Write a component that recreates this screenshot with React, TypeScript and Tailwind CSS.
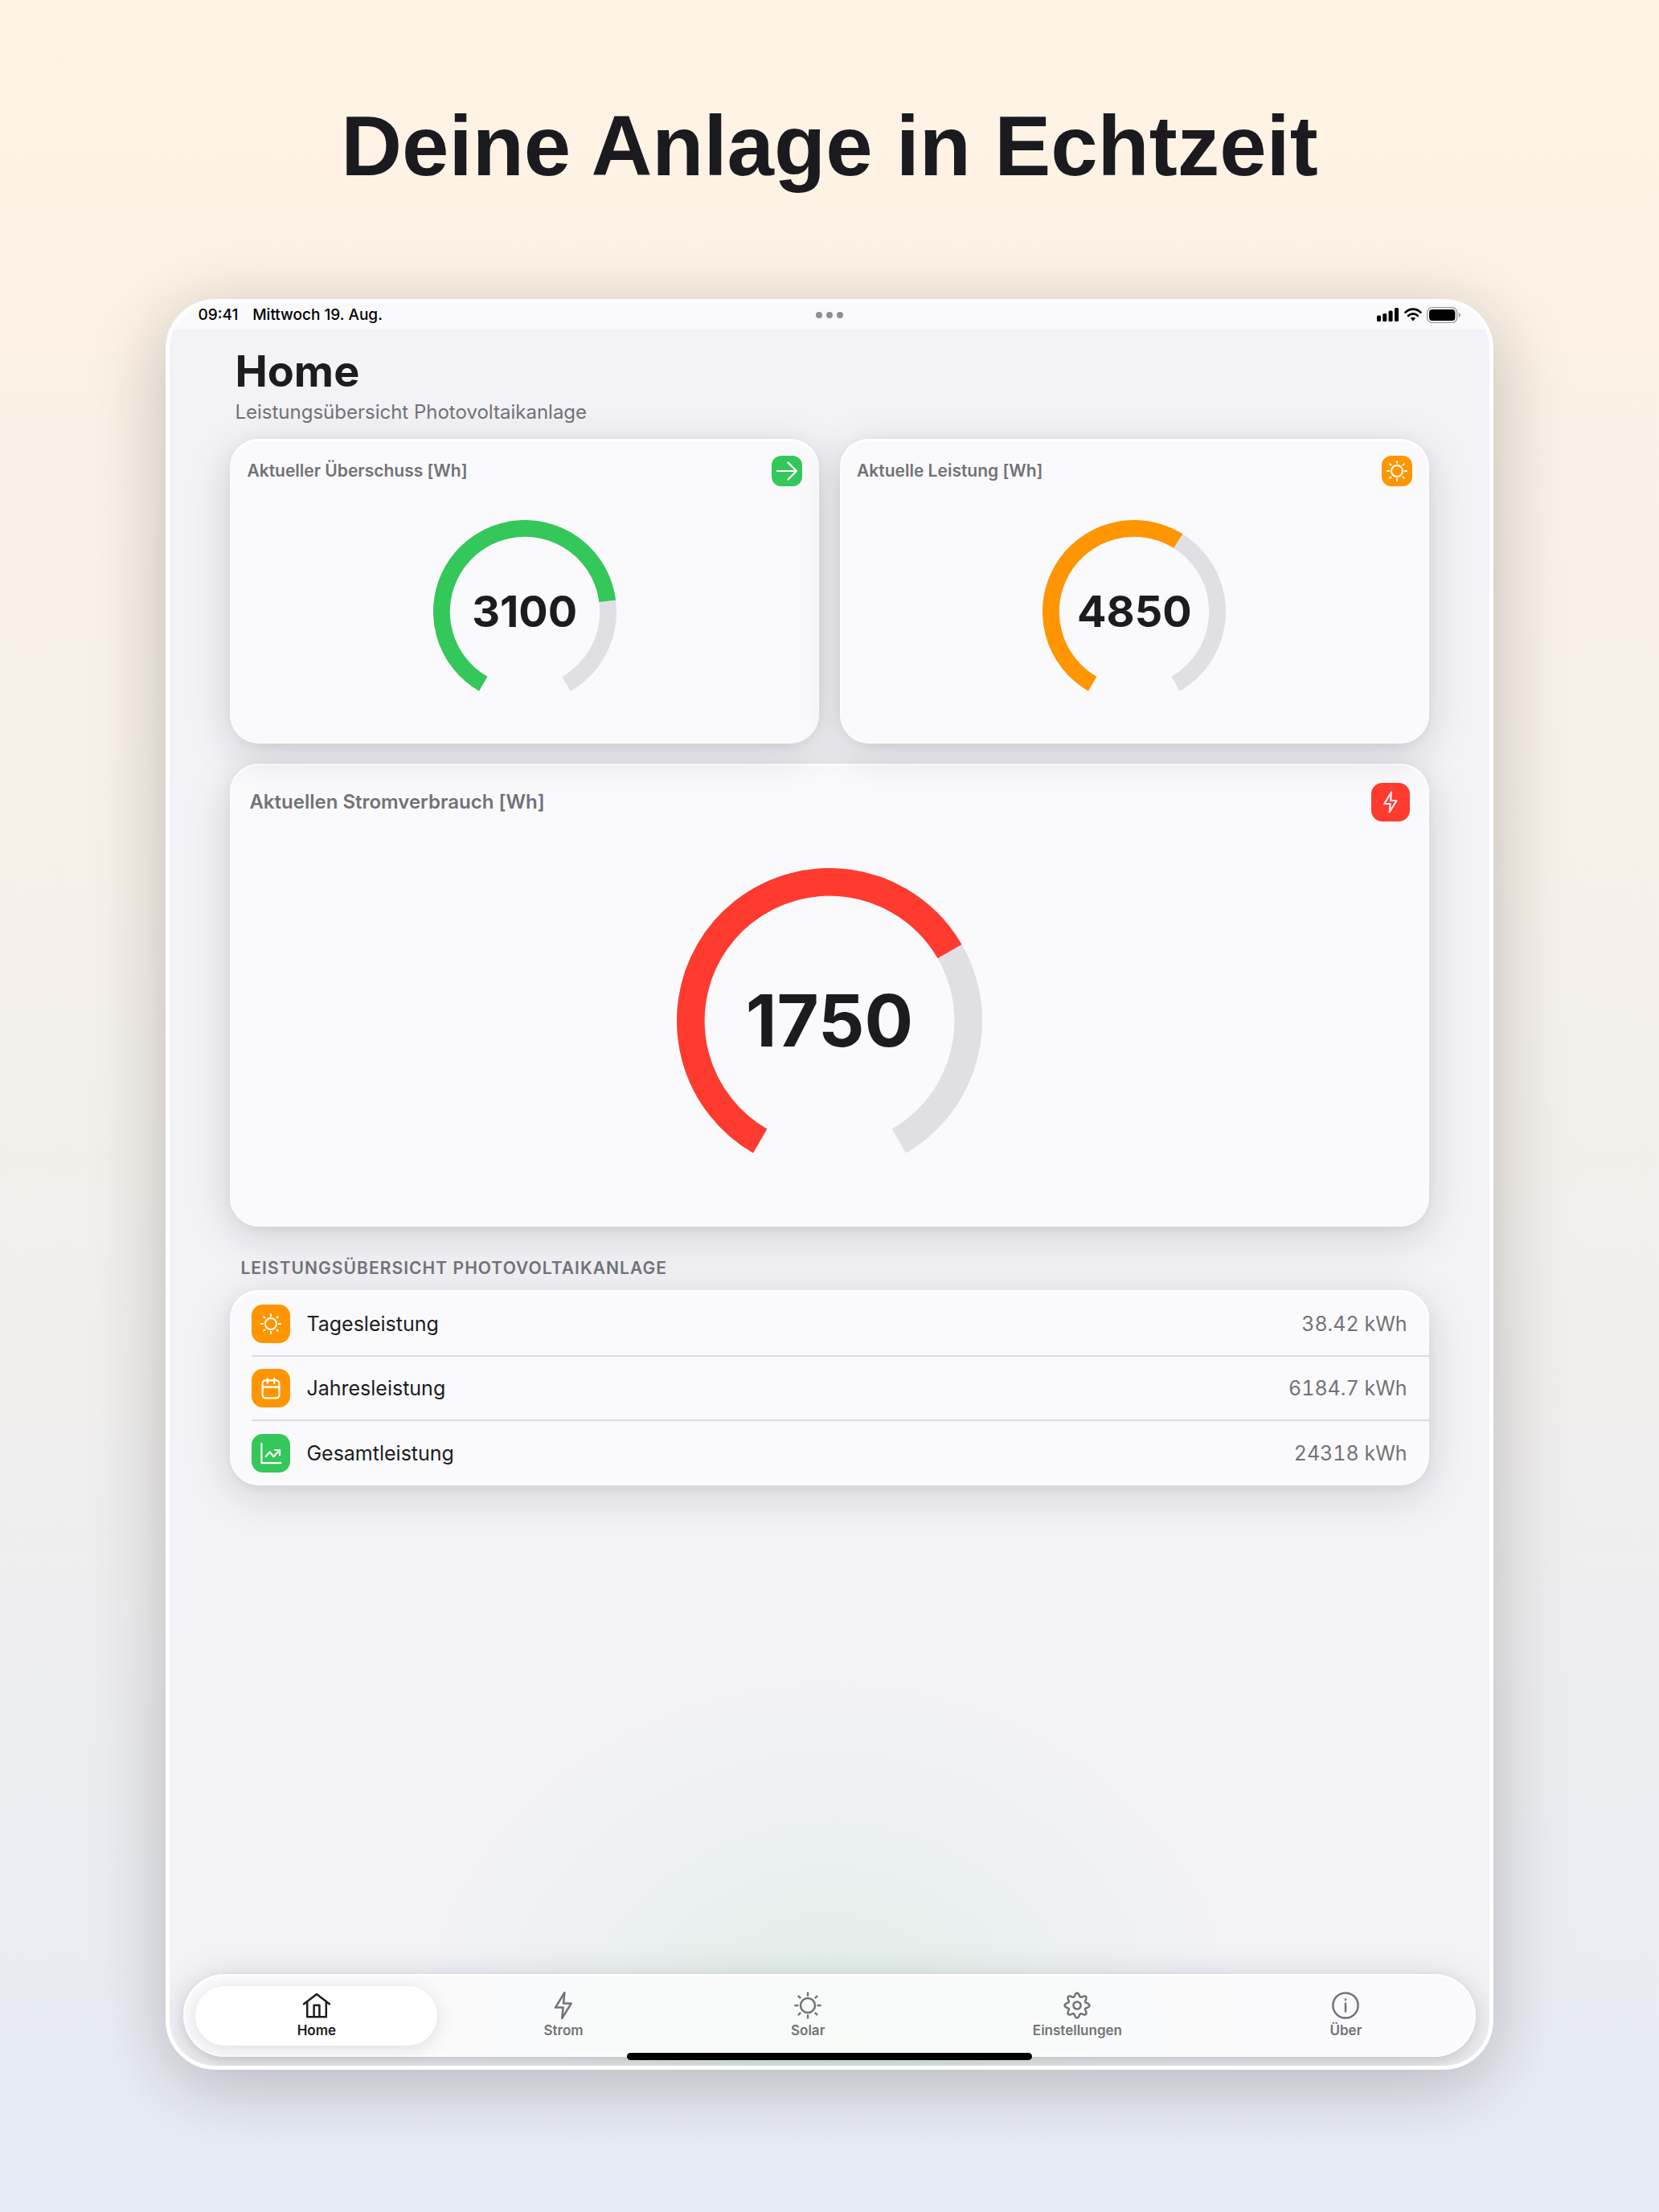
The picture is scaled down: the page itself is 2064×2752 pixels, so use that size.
import type { ReactNode } from 'react';

interface IconProps {
  className?: string;
  strokeWidth?: number;
}

function Icon({ className = 'size-9', strokeWidth = 2.2, children }: IconProps & { children: ReactNode }) {
  return (
    <svg
      viewBox="-18 -18 36 36"
      className={className}
      fill="none"
      stroke="currentColor"
      strokeWidth={strokeWidth}
      strokeLinecap="round"
      strokeLinejoin="round"
      aria-hidden="true"
    >
      {children}
    </svg>
  );
}

function HomeIcon(props: IconProps) {
  return (
    <Icon {...props}>
      <path d="M-16 -1.8 0 -14 16 -1.8M-11.8 -4.6V14.2H11.8V-4.6M-3.4 14.2V-.2H3.4V14.2" />
    </Icon>
  );
}

function BoltIcon(props: IconProps) {
  return (
    <Icon {...props}>
      <path d="M1.4 -16 -10 2.6H-.4L-1.8 16 9.6 -2.4H0Z" />
    </Icon>
  );
}

function SunIcon(props: IconProps) {
  return (
    <Icon {...props}>
      <circle r="9" />
      <path d="M0 -15.6V-12.6M0 12.6V15.6M-15.6 0H-12.6M12.6 0H15.6M-11.3 -11.3 -9.6 -9.6M9.6 9.6 11.3 11.3M-11.3 11.3 -9.6 9.6M9.6 -9.6 11.3 -11.3" />
    </Icon>
  );
}

// Eight soft teeth around the hub
const gearPoints = Array.from({ length: 144 }, (_, i) => {
  const a = (i / 144) * Math.PI * 2;
  const r = 13.3 + 2.2 * Math.cos(8 * a);
  return `${(r * Math.sin(a)).toFixed(2)},${(-r * Math.cos(a)).toFixed(2)}`;
}).join(' ');

function GearIcon(props: IconProps) {
  return (
    <Icon {...props}>
      <polygon points={gearPoints} />
      <circle r="4.6" />
    </Icon>
  );
}

function InfoIcon(props: IconProps) {
  return (
    <Icon {...props}>
      <circle r="15.6" />
      <path d="M0 -2.6V7.6M0 -7.6V-7" />
    </Icon>
  );
}

function ArrowIcon(props: IconProps) {
  return (
    <Icon {...props}>
      <path d="M-12 0H12M1.3 -10.6 12 0 1.3 10.6" />
    </Icon>
  );
}

function CalendarIcon(props: IconProps) {
  return (
    <Icon {...props}>
      <rect x="-10.4" y="-9.6" width="20.8" height="22" rx="3.6" />
      <path d="M-10.4 -1.4H10.4M-4.2 -12V-6M4.2 -12V-6" />
    </Icon>
  );
}

function ChartIcon(props: IconProps) {
  return (
    <Icon {...props}>
      <path d="M-11.6 -12V12.2H12.4M-6.2 4 -1.4 -1.6 3.4 4.2 10.8 -3.8M5 -4H11V2.2" />
    </Icon>
  );
}

function StatusBar() {
  return (
    <div className="grid h-[33px] grid-cols-3 items-center bg-[#fafafc] px-[35px] pb-1 text-[19px] leading-6 font-medium text-black">
      <div className="flex gap-[18px]">
        <span>09:41</span>
        <span>Mittwoch 19. Aug.</span>
      </div>
      <div className="flex justify-center gap-[5px]">
        <span className="size-2 rounded-full bg-[#8e8e93]" />
        <span className="size-2 rounded-full bg-[#8e8e93]" />
        <span className="size-2 rounded-full bg-[#8e8e93]" />
      </div>
      <div className="flex items-center justify-end gap-1.5">
        <svg viewBox="0 0 28 17" className="h-[17px] w-7" aria-hidden="true">
          <rect x="0" y="9.5" width="5" height="7.5" rx="1.5" />
          <rect x="7.3" y="7" width="5" height="10" rx="1.5" />
          <rect x="14.6" y="3.5" width="5" height="13.5" rx="1.5" />
          <rect x="22" y="0" width="5" height="17" rx="1.5" />
        </svg>
        <svg viewBox="0 0 22 17" className="h-[17px] w-[22px]" aria-hidden="true">
          <path
            d="M1.5 5.6C7 .2 15 .2 20.5 5.6M5.2 9.8C8.6 6.6 13.4 6.6 16.8 9.8"
            fill="none"
            stroke="#000"
            strokeWidth="2.7"
            strokeLinecap="round"
          />
          <path d="M7.8 12.8C9.7 11.3 12.3 11.3 14.2 12.8L11 16.6Z" />
        </svg>
        <svg viewBox="0 0 43 20" className="h-5 w-[43px]" aria-hidden="true">
          <rect x=".7" y=".7" width="37" height="18.6" rx="6" fill="none" stroke="#9a9a9c" strokeWidth="1.3" />
          <rect x="3" y="3" width="32.4" height="14" rx="4" />
          <path d="M39.8 7C42.6 8 42.6 12 39.8 13Z" fill="#9a9a9c" />
        </svg>
      </div>
    </div>
  );
}

function Gauge({ value, max, color, className }: { value: number; max: number; color: string; className: string }) {
  return (
    <div className="grid place-items-center">
      <svg viewBox="-190 -190 380 380" className={`col-start-1 row-start-1 ${className}`} aria-hidden="true">
        {/* 300 degree track, open at the bottom */}
        <g transform="rotate(120)" fill="none" strokeWidth="34.6">
          <circle r="172.7" pathLength="360" stroke="#e0dfe4" strokeDasharray="300 60" />
          <circle r="172.7" pathLength="360" stroke={color} strokeDasharray={`${(value / max) * 300} 360`} />
        </g>
      </svg>
      <span className="col-start-1 row-start-1 font-bold">{value}</span>
    </div>
  );
}

const cardClass =
  'bg-[#fafafc] shadow-[inset_0_3px_1px_#fff,inset_0_0_0_1px_rgba(255,255,255,0.7),0_12px_56px_rgba(20,18,30,0.14),0_4px_14px_rgba(20,18,30,0.06)]';

function SmallCard(props: { title: string; value: number; max: number; color: string; tile: string; icon: ReactNode }) {
  return (
    <section className={`rounded-[36px] px-[21px] pt-[21px] pb-[50px] ${cardClass}`}>
      <div className="flex items-center justify-between">
        <h2 className="text-[21px] leading-7 font-semibold text-[#727277]">{props.title}</h2>
        <span className={`grid size-[38px] place-items-center rounded-[12px] text-white ${props.tile}`}>{props.icon}</span>
      </div>
      <div className="mt-[42px] text-[54px] leading-none">
        <Gauge value={props.value} max={props.max} color={props.color} className="size-[228px]" />
      </div>
    </section>
  );
}

const rows = [
  {
    label: 'Tagesleistung',
    value: '38.42 kWh',
    tile: 'bg-[#ff9500]',
    icon: <SunIcon className="size-7" strokeWidth={2.5} />,
  },
  { label: 'Jahresleistung', value: '6184.7 kWh', tile: 'bg-[#ff9500]', icon: <CalendarIcon /> },
  { label: 'Gesamtleistung', value: '24318 kWh', tile: 'bg-[#34c759]', icon: <ChartIcon /> },
];

const tabs = [
  { label: 'Home', icon: HomeIcon },
  { label: 'Strom', icon: BoltIcon },
  { label: 'Solar', icon: SunIcon },
  { label: 'Einstellungen', icon: GearIcon },
  { label: 'Über', icon: InfoIcon },
];

function TabBar() {
  return (
    <nav className="mx-[17px] mb-[11px] flex gap-1.5 rounded-full bg-white/70 px-[15px] pt-[15px] pb-[14px] shadow-[inset_0_3px_1px_#fff,inset_0_0_0_2px_rgba(255,255,255,0.7),0_10px_50px_rgba(20,18,30,0.16),0_4px_14px_rgba(20,18,30,0.08)]">
      {tabs.map(({ label, icon: TabIcon }, i) => (
        <button
          key={label}
          type="button"
          className={`flex h-[74px] flex-auto flex-col items-center gap-[3px] rounded-full pt-[6px] text-[17px] leading-5 font-semibold ${
            i === 0 ? 'bg-white text-[#1c1c1e] shadow-[0_4px_24px_rgba(20,18,30,0.12)]' : 'text-[#727277]'
          }`}
        >
          <TabIcon strokeWidth={2.5} />
          {label}
        </button>
      ))}
    </nav>
  );
}

export default function App() {
  return (
    <div className="flex min-h-screen flex-col bg-linear-to-b from-[#fff3e3] via-[#f1efed] via-60% to-[#e7ecf6] pb-[177px]">
      <h1 className="pt-[122px] text-center font-['Liberation_Sans',Arial,sans-serif] text-[105px] leading-[120px] font-bold text-[#1a1a1f]">
        Deine Anlage in Echtzeit
      </h1>

      <div className="relative mx-auto mt-[130px] flex w-4/5 flex-1 flex-col overflow-hidden rounded-[62px] border-5 border-white bg-[#f2f2f7] font-[Inter,'Liberation_Sans',sans-serif] text-[#1c1c1e] shadow-[0_20px_90px_rgba(30,25,20,0.25)]">
        <StatusBar />

        <main className="flex-1 px-[75px] pt-[22px]">
          <h2 className="pl-[6px] text-[54px] leading-[60px] font-bold">Home</h2>
          <p className="pt-[5px] pl-[6px] text-[24px] leading-[32px] text-[#727277]">Leistungsübersicht Photovoltaikanlage</p>

          <div className="mt-[17px] grid grid-cols-2 gap-[26px]">
            <SmallCard
              title="Aktueller Überschuss [Wh]"
              value={3100}
              max={4000}
              color="#34c759"
              tile="bg-[#34c759]"
              icon={<ArrowIcon />}
            />
            <SmallCard
              title="Aktuelle Leistung [Wh]"
              value={4850}
              max={8000}
              color="#ff9500"
              tile="bg-[#ff9500]"
              icon={<SunIcon className="size-7" strokeWidth={2.5} />}
            />
          </div>

          <section className={`mt-[25px] rounded-[36px] px-6 pt-6 pb-[66px] ${cardClass}`}>
            <div className="flex items-center justify-between">
              <h2 className="text-[24px] leading-8 font-semibold text-[#727277]">Aktuellen Stromverbrauch [Wh]</h2>
              <span className="grid size-12 place-items-center rounded-[14px] bg-[#ff3b30] text-white">
                <BoltIcon className="size-7" strokeWidth={2.5} />
              </span>
            </div>
            <div className="mt-[58px] text-[90px] leading-none">
              <Gauge value={1750} max={2500} color="#ff3b30" className="size-[380px]" />
            </div>
          </section>

          <h3 className="mt-[38px] pl-[13px] text-[21px] leading-7 font-semibold tracking-wider text-[#727277] uppercase">
            Leistungsübersicht Photovoltaikanlage
          </h3>
          <ul className={`mt-[13px] overflow-hidden rounded-[36px] pt-[3px] pl-[27px] ${cardClass}`}>
            {rows.map((row) => (
              <li
                key={row.label}
                className="flex h-20 items-center gap-5 border-b-2 border-[#dcdce0] pr-[27px] text-[25px] leading-8 last:border-b-0"
              >
                <span className={`grid size-12 place-items-center rounded-[14px] text-white ${row.tile}`}>{row.icon}</span>
                <span className="flex-1">{row.label}</span>
                <span className="text-[#727277] tabular-nums">{row.value}</span>
              </li>
            ))}
          </ul>
        </main>

        <div className="-mt-[380px] bg-[radial-gradient(ellipse_520px_480px_at_50%_100%,#e0f0e5_0%,#e7efec_35%,#edf1f3_65%,rgba(242,242,247,0)_100%)] pt-[380px]">
          <TabBar />
        </div>
        <div className="absolute bottom-[7px] left-1/2 h-[9px] w-[504px] -translate-x-1/2 rounded-full bg-black" />
      </div>
    </div>
  );
}
